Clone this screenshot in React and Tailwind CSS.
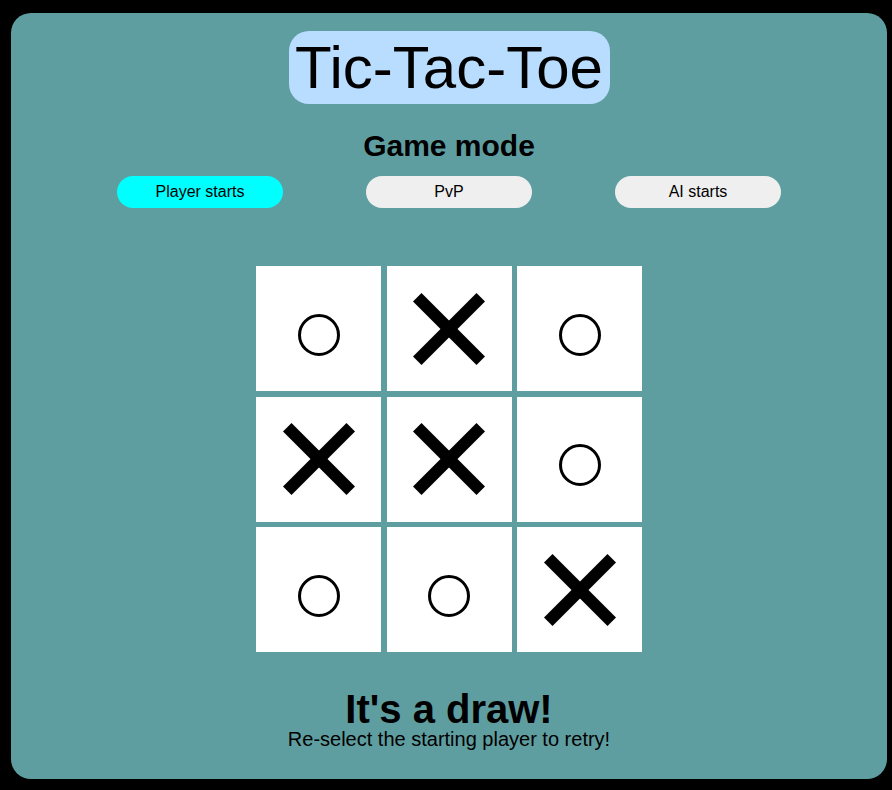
import React from "react";

const board = ["O", "X", "O", "X", "X", "O", "O", "O", "X"];

function Mark({ v }) {
  if (v === "X") {
    return (
      <svg width="72" height="72" viewBox="0 0 72 72">
        <line x1="4.25" y1="4.25" x2="67.75" y2="67.75" stroke="#000" strokeWidth="12" />
        <line x1="67.75" y1="4.25" x2="4.25" y2="67.75" stroke="#000" strokeWidth="12" />
      </svg>
    );
  }
  return (
    <svg width="42" height="42" viewBox="0 0 42 42" className="mt-[12px]">
      <circle cx="21" cy="21" r="19.5" fill="none" stroke="#000" strokeWidth="3" />
    </svg>
  );
}

export default function App() {
  return (
    <div
      className="w-[892px] h-[790px] bg-black pl-[11px] pt-[13px]"
      style={{ fontFamily: '"Liberation Sans", Arial, sans-serif' }}
    >
      <div className="w-[876px] h-[766px] bg-[#5f9ea0] rounded-[20px] flex flex-col items-center text-black">
        <div className="mt-[18px] h-[73px] w-[321px] bg-[#b9ddfe] rounded-[20px] flex items-center justify-center">
          <h1 className="text-[60px] leading-[69px] font-normal whitespace-nowrap">Tic-Tac-Toe</h1>
        </div>
        <h2 className="mt-[24px] text-[30px] leading-[35px] font-bold">Game mode</h2>
        <div className="mt-[13px] flex gap-[83px]">
          <button className="w-[166px] h-[32px] rounded-full bg-[#00ffff] text-[16px]">Player starts</button>
          <button className="w-[166px] h-[32px] rounded-full bg-[#efefef] text-[16px]">PvP</button>
          <button className="w-[166px] h-[32px] rounded-full bg-[#efefef] text-[16px]">AI starts</button>
        </div>
        <div className="mt-[58px] grid grid-cols-[125px_125px_125px] grid-rows-[125px_125px_125px] gap-[5.5px]">
          {board.map((v, i) => (
            <div key={i} className="bg-white flex items-center justify-center">
              <Mark v={v} />
            </div>
          ))}
        </div>
        <div className="mt-[37px] text-[40px] leading-[40px] font-bold">It's a draw!</div>
        <div className="text-[20px] leading-[20px]">Re-select the starting player to retry!</div>
      </div>
    </div>
  );
}
